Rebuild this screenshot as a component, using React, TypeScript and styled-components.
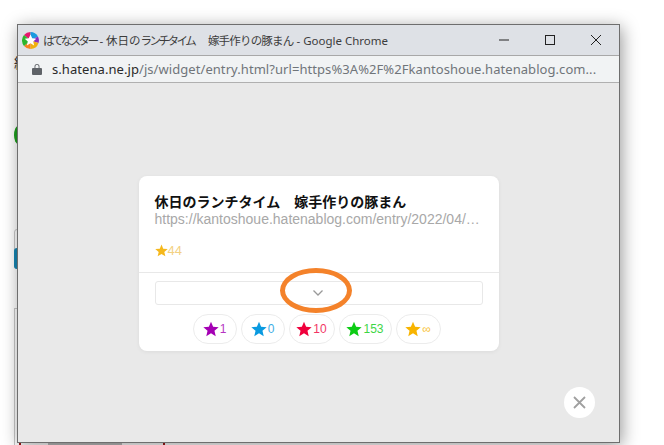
import React, { FC } from "react";
import styled, { createGlobalStyle } from "styled-components";

const GlobalStyle = createGlobalStyle`
    html, body {
        margin: 0;
        padding: 0;
        background: #fff;
    }
    body {
        font-family: "Noto Sans", "Noto Sans CJK JP", sans-serif;
    }
`;

type Reaction = { color: string; count: string; width: number };

const reactions: Reaction[] = [
    { color: "#a400b4", count: "1", width: 44 },
    { color: "#0a9ae0", count: "0", width: 44 },
    { color: "#f0003c", count: "10", width: 46 },
    { color: "#0ccc14", count: "153", width: 53 },
    { color: "#f8b400", count: "∞", width: 45 },
];

const Star: FC<{ color: string; size: number }> = ({ color, size }) => (
    <svg width={size} height={size} viewBox="0 0 24 24">
        <path
            fill={color}
            d="M12 1l3.2 7.6 8.3.7-6.3 5.4 1.9 8.1L12 18.5l-7.1 4.3 1.9-8.1L.5 9.3l8.3-.7z"
        />
    </svg>
);

const Logo = () => (
    <svg width="17" height="17" viewBox="0 0 34 34">
        <path fill="#e6186e" d="M17 17L4 6a17 17 0 0 1 13-6z" />
        <path fill="#1a9be0" d="M17 17V0a17 17 0 0 1 15 9z" />
        <path fill="#8a2cc0" d="M17 17l15-8a17 17 0 0 1 1 13z" />
        <path fill="#f0b010" d="M17 17l16 5a17 17 0 0 1-16 12z" />
        <path fill="#f58220" d="M17 17v17A17 17 0 0 1 4 28z" />
        <path fill="#2cb52c" d="M17 17L4 28A17 17 0 0 1 4 6z" />
        <path
            fill="#fff"
            d="M17 5l3.4 7.6 8.2.8-6.2 5.4 1.9 8.1-7.3-4.3-7.3 4.3 1.9-8.1-6.2-5.4 8.2-.8z"
        />
    </svg>
);

export default function App() {
    return (
        <Desktop>
            <GlobalStyle />
            <BehindGlyph>続</BehindGlyph>
            <BehindGreen />
            <BehindBox />
            <BehindBlue />
            <BehindRule />
            <BehindBar />
            <BehindTick $left={19} />
            <BehindTick $left={163} />
            <BrowserWindow>
                <TitleBar>
                    <Logo />
                    <TitleText>
                        <Squeezed $spacing={-2.6}>はてなスター</Squeezed>
                        {" - "}
                        <Squeezed $spacing={0}>休日の</Squeezed>
                        <Squeezed $spacing={-2.5}>ランチタイム</Squeezed>
                        <Squeezed $spacing={2}>　</Squeezed>
                        <Squeezed $spacing={-0.8}>嫁手作りの豚まん</Squeezed>
                        {" - Google Chrome"}
                    </TitleText>
                    <WindowButtons>
                        <WindowButton>
                            <svg width="12" height="12" viewBox="0 0 12 12">
                                <path d="M1 6h10" stroke="#222" fill="none" />
                            </svg>
                        </WindowButton>
                        <WindowButton>
                            <svg width="12" height="12" viewBox="0 0 12 12">
                                <rect x="1.5" y="1.5" width="9" height="9" stroke="#222" fill="none" />
                            </svg>
                        </WindowButton>
                        <WindowButton>
                            <svg width="12" height="12" viewBox="0 0 12 12">
                                <path d="M1 1l10 10M11 1L1 11" stroke="#222" fill="none" />
                            </svg>
                        </WindowButton>
                    </WindowButtons>
                </TitleBar>
                <AddressBar>
                    <svg width="10" height="12" viewBox="0 0 10 12">
                        <path
                            fill="#5f6368"
                            d="M1 5h8a1 1 0 0 1 1 1v5a1 1 0 0 1-1 1H1a1 1 0 0 1-1-1V6a1 1 0 0 1 1-1zm1.5 0V3.4a2.5 2.5 0 0 1 5 0V5H6.6V3.4a1.6 1.6 0 0 0-3.2 0V5z"
                        />
                    </svg>
                    <Url>
                        <UrlHost>s.hatena.ne.jp</UrlHost>
                        /js/widget/entry.html?url=https%3A%2F%2Fkantoshoue.hatenablog.com...
                    </Url>
                </AddressBar>
                <Overlay>
                    <Card>
                        <CardHead>
                            <EntryTitle>休日のランチタイム　嫁手作りの豚まん</EntryTitle>
                            <EntryUrl>https://kantoshoue.hatenablog.com/entry/2022/04/…</EntryUrl>
                            <StarTotal>
                                <Star color="#f5b81c" size={13} />
                                <span>44</span>
                            </StarTotal>
                        </CardHead>
                        <CardFoot>
                            <Expander>
                                <svg width="10" height="6" viewBox="0 0 10 6">
                                    <path d="M.5.5L5 5 9.5.5" stroke="#999" strokeWidth="1.3" fill="none" />
                                </svg>
                            </Expander>
                            <PillRow>
                                {reactions.map((r) => (
                                    <Pill key={r.color} $width={r.width}>
                                        <Star color={r.color} size={16} />
                                        <PillCount $color={r.color}>{r.count}</PillCount>
                                    </Pill>
                                ))}
                            </PillRow>
                        </CardFoot>
                        <Circled />
                    </Card>
                    <CloseButton>
                        <svg width="13" height="13" viewBox="0 0 13 13">
                            <path d="M1 1l11 11M12 1L1 12" stroke="#a0a0a0" strokeWidth="1.8" fill="none" />
                        </svg>
                    </CloseButton>
                </Overlay>
            </BrowserWindow>
        </Desktop>
    );
}

const Desktop = styled.div`
    position: relative;
    width: 664px;
    height: 445px;
    overflow: hidden;
    background: #fff;
    padding: 24px 0 0 17px;
    box-sizing: border-box;
`;

const BehindGlyph = styled.div`
    position: absolute;
    left: 14px;
    top: 55px;
    font-size: 14px;
    line-height: 16px;
    color: #333;
`;

const BehindGreen = styled.div`
    position: absolute;
    left: 14px;
    top: 126px;
    width: 8px;
    height: 18px;
    border-radius: 50%;
    background: #1ea01e;
`;

const BehindBox = styled.div`
    position: absolute;
    left: 14px;
    top: 229px;
    width: 8px;
    height: 40px;
    box-sizing: border-box;
    border: 1px solid #c8c8c8;
    border-radius: 3px;
`;

const BehindBlue = styled.div`
    position: absolute;
    left: 14px;
    top: 248px;
    width: 6px;
    height: 21px;
    border-radius: 3px;
    background: #1787b4;
`;

const BehindRule = styled.div`
    position: absolute;
    left: 14px;
    top: 308px;
    width: 6px;
    height: 137px;
    box-sizing: border-box;
    border-left: 1px solid #c8c8c8;
    border-top: 1px solid #c8c8c8;
`;

const BehindBar = styled.div`
    position: absolute;
    left: 48px;
    top: 442px;
    width: 74px;
    height: 3px;
    background: #bdbdbd;
`;

const BehindTick = styled.div<{ $left: number }>`
    position: absolute;
    left: ${(p) => p.$left}px;
    top: 442px;
    width: 2px;
    height: 3px;
    background: #a01818;
`;

const BrowserWindow = styled.div`
    position: relative;
    width: 603px;
    height: 419px;
    box-sizing: border-box;
    border: 1px solid #6e6e6e;
    display: flex;
    flex-direction: column;
    background: #e9e9e9;
    box-shadow: 2px 3px 16px rgba(0, 0, 0, 0.4);
`;

const TitleBar = styled.div`
    height: 30px;
    flex: none;
    display: flex;
    align-items: center;
    padding-left: 4px;
    background: #dee1e6;
    border-bottom: 1px solid #a8a8a8;
`;

const TitleText = styled.div`
    margin-left: 4px;
    flex: 1;
    font-size: 11.5px;
    color: #3c3c3c;
    white-space: pre;
    overflow: hidden;
`;

const Squeezed = styled.span<{ $spacing: number }>`
    letter-spacing: ${(p) => p.$spacing}px;
`;

const WindowButtons = styled.div`
    display: flex;
    flex: none;
`;

const WindowButton = styled.div`
    width: 46px;
    height: 30px;
    display: flex;
    align-items: center;
    justify-content: center;
`;

const AddressBar = styled.div`
    height: 26px;
    flex: none;
    display: flex;
    align-items: center;
    padding-left: 14px;
    background: #f1f3f4;
    border-bottom: 1px solid #b0b0b0;
`;

const Url = styled.div`
    margin-left: 10px;
    font-size: 13px;
    letter-spacing: 0.065px;
    color: #70757a;
    white-space: nowrap;
`;

const UrlHost = styled.span`
    color: #2a2a2a;
`;

const Overlay = styled.div`
    position: relative;
    flex: 1;
    display: flex;
    justify-content: center;
    padding: 93px 0 0 0;
`;

const Card = styled.div`
    position: relative;
    width: 360px;
    height: 175px;
    display: flex;
    flex-direction: column;
    background: #fff;
    border-radius: 8px;
    box-shadow: 0 1px 4px rgba(0, 0, 0, 0.06);
`;

const CardHead = styled.div`
    height: 97px;
    flex: none;
    box-sizing: border-box;
    padding: 16px 16px 0;
    border-bottom: 1px solid #e8e8e8;
`;

const EntryTitle = styled.div`
    font-size: 14px;
    font-weight: 700;
    line-height: 19px;
    color: #111;
    white-space: nowrap;
`;

const EntryUrl = styled.div`
    font-family: "Liberation Sans", sans-serif;
    font-size: 14px;
    line-height: 17px;
    color: #a8a8a8;
    white-space: nowrap;
`;

const StarTotal = styled.div`
    margin-top: 15px;
    display: flex;
    align-items: center;
    font-family: "Liberation Sans", sans-serif;
    font-size: 13px;
    color: #f3d182;
`;

const CardFoot = styled.div`
    flex: 1;
    padding: 8px 16px 0;
`;

const Expander = styled.div`
    height: 24px;
    box-sizing: border-box;
    display: flex;
    align-items: center;
    justify-content: center;
    padding-right: 2px;
    border: 1px solid #e8e8e8;
    border-radius: 3px;
`;

const PillRow = styled.div`
    margin-top: 9px;
    padding-right: 4px;
    display: flex;
    justify-content: center;
    gap: 4px;
`;

const Pill = styled.div<{ $width: number }>`
    width: ${(p) => p.$width}px;
    height: 30px;
    box-sizing: border-box;
    display: flex;
    align-items: center;
    justify-content: center;
    gap: 1px;
    background: #fff;
    border: 1px solid #ececec;
    border-radius: 15px;
`;

const PillCount = styled.span<{ $color: string }>`
    font-family: "Liberation Sans", "Noto Sans", sans-serif;
    font-size: 12px;
    color: ${(p) => p.$color};
    opacity: 0.8;
`;

const Circled = styled.div`
    position: absolute;
    left: 141px;
    top: 92px;
    width: 72px;
    height: 45px;
    box-sizing: border-box;
    border: 5px solid #f4822a;
    border-radius: 50%;
`;

const CloseButton = styled.div`
    position: absolute;
    right: 24px;
    bottom: 24px;
    width: 31px;
    height: 31px;
    border-radius: 50%;
    background: #fff;
    display: flex;
    align-items: center;
    justify-content: center;
`;
